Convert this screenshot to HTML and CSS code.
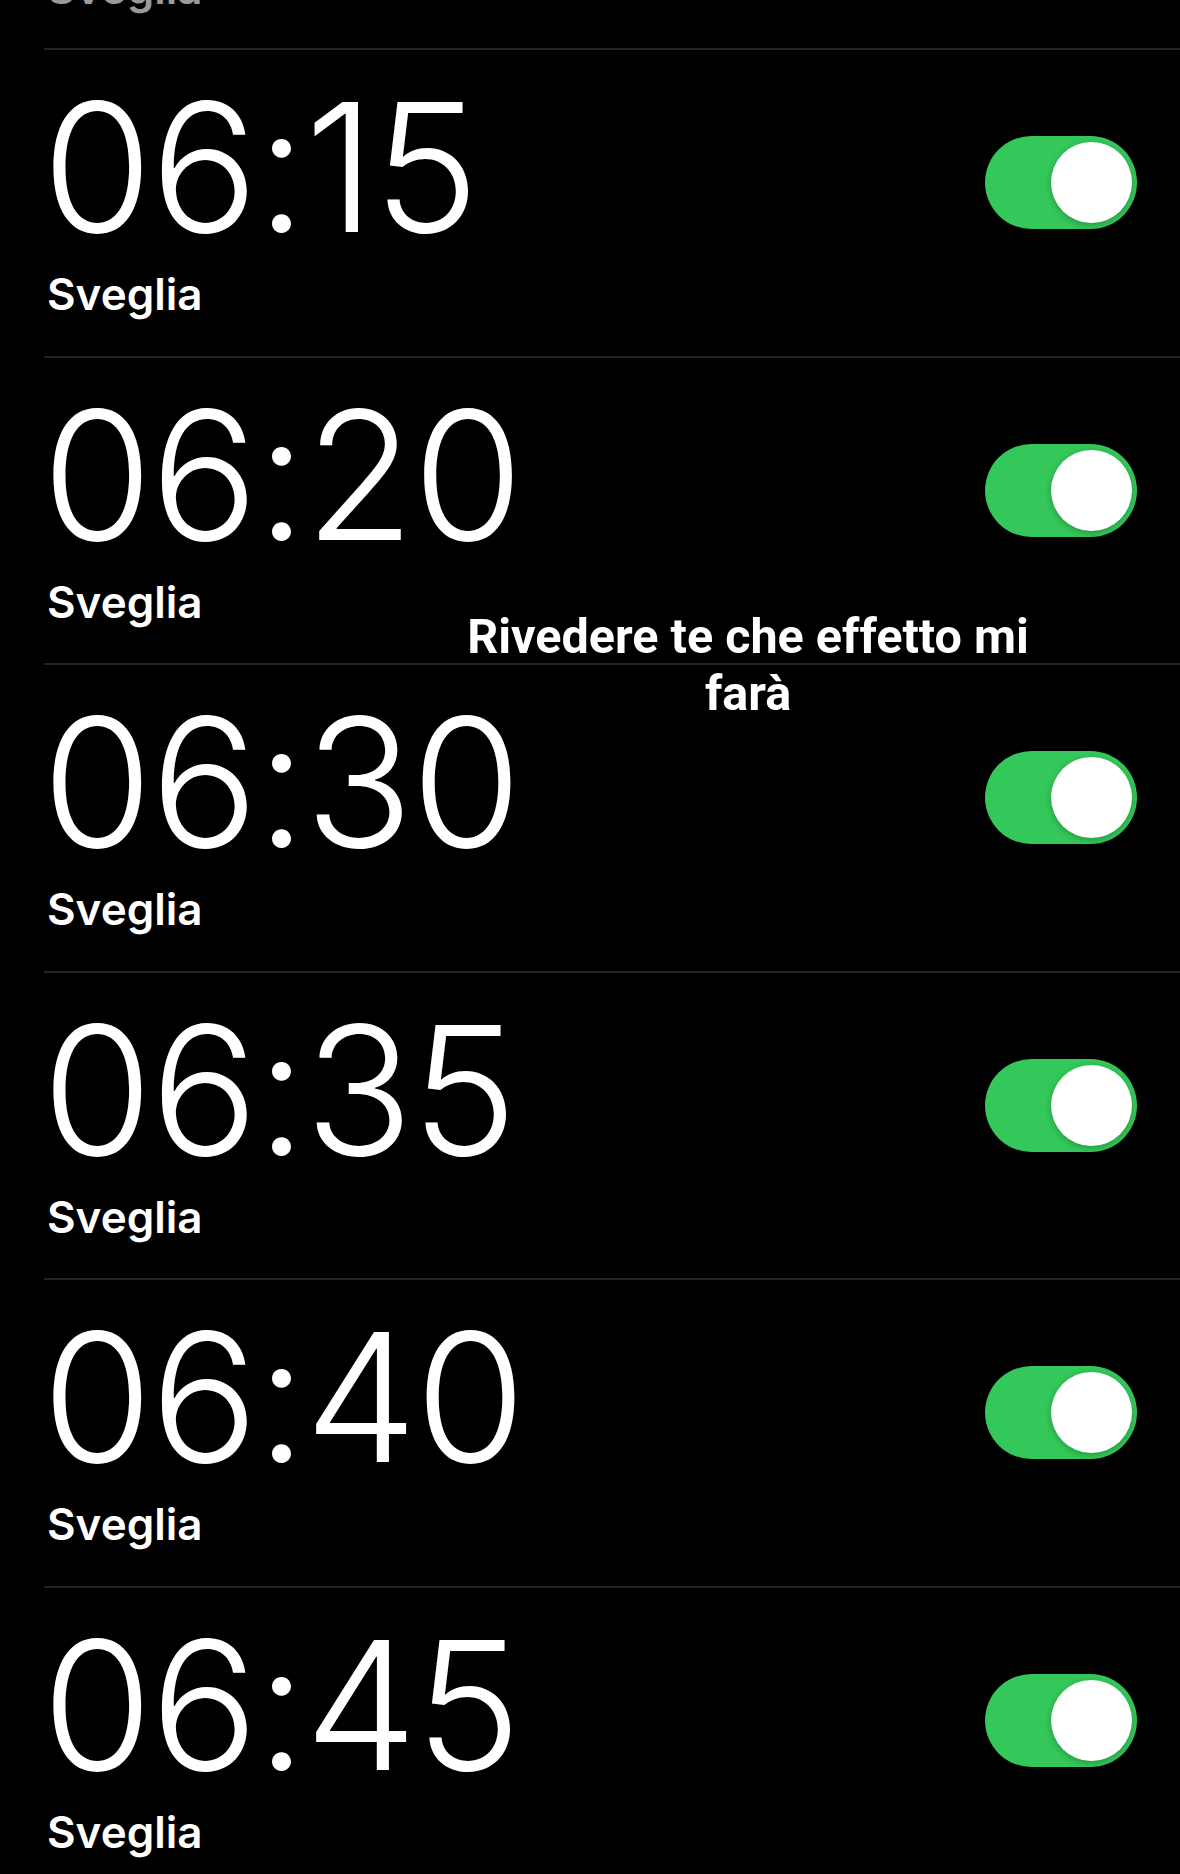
FILE: index.html
```html
<!DOCTYPE html>
<html lang="it">
<head>
  <meta charset="UTF-8">
  <meta name="viewport" content="width=device-width, initial-scale=1.0">
  <title>Sveglie</title>
  <link rel="stylesheet" href="styles.css">
</head>
<body>
  <div class="screen">
    <div class="peek">
      <div class="label">Sveglia</div>
    </div>
    <div class="alarms">
      <div class="alarm">
        <div class="alarm-info">
          <div class="time">06:15</div>
          <div class="label">Sveglia</div>
        </div>
        <span class="switch"><span class="knob"></span></span>
      </div>
      <div class="alarm">
        <div class="alarm-info">
          <div class="time">06:20</div>
          <div class="label">Sveglia</div>
        </div>
        <span class="switch"><span class="knob"></span></span>
      </div>
      <div class="alarm">
        <div class="alarm-info">
          <div class="time">06:30</div>
          <div class="label">Sveglia</div>
        </div>
        <span class="switch"><span class="knob"></span></span>
      </div>
      <div class="alarm">
        <div class="alarm-info">
          <div class="time">06:35</div>
          <div class="label">Sveglia</div>
        </div>
        <span class="switch"><span class="knob"></span></span>
      </div>
      <div class="alarm">
        <div class="alarm-info">
          <div class="time">06:40</div>
          <div class="label">Sveglia</div>
        </div>
        <span class="switch"><span class="knob"></span></span>
      </div>
      <div class="alarm">
        <div class="alarm-info">
          <div class="time">06:45</div>
          <div class="label">Sveglia</div>
        </div>
        <span class="switch"><span class="knob"></span></span>
      </div>
    </div>
    <div class="caption">Rivedere te che effetto mi<br>farà</div>
  </div>
</body>
</html>
```
FILE: styles.css
```css
body {
  margin: 0;
  padding: 0;
  background-color: #000;
  color: #fff;
  font-family: Inter, "Liberation Sans", sans-serif;
}
.screen {
  position: relative;
  width: 1180px;
  height: 1874px;
  overflow: hidden;
  background-color: #000;
}
.peek {
  height: 48px;
  overflow: hidden;
  margin-left: 44px;
}
.peek .label {
  margin-top: -34px;
  color: #9a9a9e;
}
.alarm {
  display: flex;
  justify-content: space-between;
  align-items: flex-start;
  height: 307.5px;
  box-sizing: border-box;
  margin-left: 44px;
  padding-top: 14px;
  border-top: 2px solid #222224;
}
.alarm-info {
  display: flex;
  flex-direction: column;
}
.time {
  font-size: 179px;
  font-weight: 300;
  line-height: 206px;
  letter-spacing: -2px;
  margin-left: -2px;
}
.label {
  font-size: 44px;
  font-weight: 600;
  line-height: 44px;
  margin-left: 3px;
}
.alarm .label {
  margin-top: 2px;
}
.switch {
  position: relative;
  display: block;
  width: 152px;
  height: 93px;
  margin-top: 72px;
  margin-right: 43px;
  border-radius: 47px;
  background-color: #34c759;
}
.knob {
  position: absolute;
  top: 6px;
  right: 5px;
  width: 81px;
  height: 81px;
  border-radius: 50%;
  background-color: #fff;
  box-shadow: 0 2px 6px rgba(0, 0, 0, 0.25);
}
.caption {
  position: absolute;
  top: 608px;
  left: 448px;
  width: 600px;
  text-align: center;
  font-family: Roboto, "Liberation Sans", sans-serif;
  font-size: 48.5px;
  font-weight: 700;
  line-height: 57px;
}
```
